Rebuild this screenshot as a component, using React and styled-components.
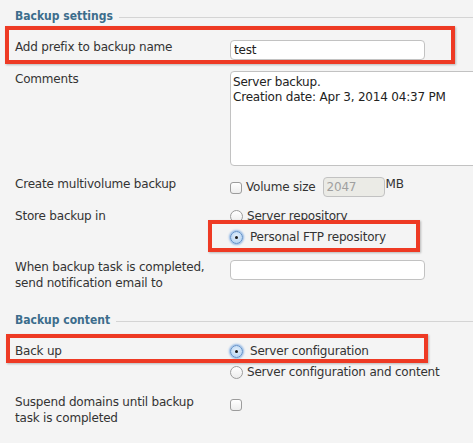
import * as React from "react";
import styled, { createGlobalStyle } from "styled-components";

const GlobalStyle = createGlobalStyle`
  html, body {
    margin: 0;
    padding: 0;
    background: #f4f4f4;
  }
  body {
    font-family: "DejaVu Sans", Verdana, sans-serif;
    font-size: 12px;
    letter-spacing: -0.2px;
    color: #333;
  }
`;

const Page = styled.div`
  position: relative;
  width: 473px;
  height: 443px;
  overflow: hidden;
  background: #f4f4f4;
  padding-top: 6px;
  box-sizing: border-box;
`;

const SectionHeading = styled.div`
  display: flex;
  align-items: center;
  height: 20px;
  margin-top: ${(p) => p.$mt || 0}px;
  padding-left: 15px;
  font-family: "DejaVu Sans Condensed", "DejaVu Sans", sans-serif;
  letter-spacing: 0;
  color: #3c6d8c;
  font-weight: bold;

  &::after {
    content: "";
    flex: 1;
    height: 1px;
    margin-left: 6px;
    margin-top: 2px;
    background: #d4d4d4;
  }
`;

const Row = styled.div`
  display: grid;
  grid-template-columns: 230px 1fr;
  align-items: start;
  margin-top: ${(p) => p.$mt || 0}px;
`;

const Label = styled.div`
  padding-left: 15px;
  line-height: ${(p) => p.$lh || 15}px;
  padding-top: ${(p) => p.$pt || 0}px;
`;

const Field = styled.div`
  display: flex;
  flex-direction: ${(p) => (p.$column ? "column" : "row")};
  align-items: ${(p) => (p.$column ? "flex-start" : "center")};
  gap: ${(p) => p.$gap || 0}px;
`;

const TextInput = styled.input`
  box-sizing: border-box;
  width: ${(p) => p.$w || 195}px;
  height: 20px;
  margin: ${(p) => p.$mt || 0}px 0 0 0;
  padding: 0 3px;
  border: 1px solid #c2c2c2;
  border-radius: 4px;
  background: ${(p) => (p.disabled ? "#ebebe6" : "#fff")};
  color: ${(p) => (p.disabled ? "#a0a0a0" : "#222")};
  font: inherit;
  letter-spacing: -0.2px;
  outline: none;
`;

const TextArea = styled.textarea`
  box-sizing: border-box;
  width: 260px;
  height: 95px;
  margin: 0;
  padding: 3px 2px;
  border: 1px solid #c2c2c2;
  border-radius: 4px 0 0 4px;
  background: #fff;
  color: #222;
  font: inherit;
  letter-spacing: -0.2px;
  line-height: 15px;
  resize: none;
  outline: none;
`;

const Check = styled.span`
  display: inline-block;
  box-sizing: border-box;
  width: 12px;
  height: 12px;
  margin: ${(p) => p.$m || "0"};
  border: 1px solid #9c9c9c;
  border-radius: 3px;
  background: linear-gradient(#ffffff, #ededed);
  flex-shrink: 0;
`;

const Radio = styled.span`
  display: inline-block;
  position: relative;
  box-sizing: border-box;
  width: 13px;
  height: 13px;
  margin-right: ${(p) => (p.$on ? 7 : 4)}px;
  border-radius: 50%;
  flex-shrink: 0;
  border: 1px solid ${(p) => (p.$on ? "#5f8fc7" : "#9c9c9c")};
  background: ${(p) =>
    p.$on
      ? "radial-gradient(circle at 50% 40%, #e6f1fc, #a9cbef)"
      : "linear-gradient(#ffffff, #ececec)"};
  box-shadow: ${(p) => (p.$on ? "0 0 2px 1px #8fb6e6" : "none")};

  &::after {
    content: "";
    display: ${(p) => (p.$on ? "block" : "none")};
    position: absolute;
    left: 4px;
    top: 4px;
    width: 3px;
    height: 3px;
    border-radius: 50%;
    background: #1a1a1a;
  }
`;

const Option = styled.div`
  display: flex;
  align-items: center;
  height: 16px;
  line-height: 16px;
`;

const Gap = styled.span`
  margin-right: ${(p) => p.$w}px;
`;

const Unit = styled.span`
  align-self: flex-start;
  line-height: 15px;
  margin-left: 1px;
`;

const Marker = styled.div`
  position: absolute;
  box-sizing: border-box;
  border: 4px solid #ee3a24;
  box-shadow: 1px 1px 2px rgba(0, 0, 0, 0.25);
  pointer-events: none;
`;

export default function App() {
  return (
    <>
      <GlobalStyle />
      <Page>
        <SectionHeading>Backup settings</SectionHeading>

        <Row $mt={14}>
          <Label>Add prefix to backup name</Label>
          <Field>
            <TextInput defaultValue="test" />
          </Field>
        </Row>

        <Row $mt={11}>
          <Label $pt={1}>Comments</Label>
          <Field>
            <TextArea
              readOnly
              defaultValue={"Server backup.\nCreation date: Apr 3, 2014 04:37 PM"}
            />
          </Field>
        </Row>

        <Row $mt={11}>
          <Label>Create multivolume backup</Label>
          <Field>
            <Check $m="2px 4px 0 0" />
            <Gap $w={7}>Volume size</Gap>
            <TextInput $w={62} disabled defaultValue="2047" />
            <Unit>MB</Unit>
          </Field>
        </Row>

        <Row $mt={11}>
          <Label $lh={16}>Store backup in</Label>
          <Field $column $gap={5}>
            <Option>
              <Radio />
              Server repository
            </Option>
            <Option>
              <Radio $on />
              Personal FTP repository
            </Option>
          </Field>
        </Row>

        <Row $mt={14}>
          <Label $lh={16}>
            When backup task is completed,
            <br />
            send notification email to
          </Label>
          <Field>
            <TextInput $mt={1} />
          </Field>
        </Row>

        <SectionHeading $mt={19}>Backup content</SectionHeading>

        <Row $mt={13}>
          <Label $lh={16}>Back up</Label>
          <Field $column $gap={5}>
            <Option>
              <Radio $on />
              Server configuration
            </Option>
            <Option>
              <Radio />
              Server configuration and content
            </Option>
          </Field>
        </Row>

        <Row $mt={14}>
          <Label $lh={16}>
            Suspend domains until backup
            <br />
            task is completed
          </Label>
          <Field>
            <Check $m="5px 0 0 0" />
          </Field>
        </Row>

        <Marker style={{ left: 5, top: 26, width: 450, height: 38 }} />
        <Marker style={{ left: 208, top: 220, width: 212, height: 32 }} />
        <Marker style={{ left: 6, top: 334, width: 422, height: 29 }} />
      </Page>
    </>
  );
}
